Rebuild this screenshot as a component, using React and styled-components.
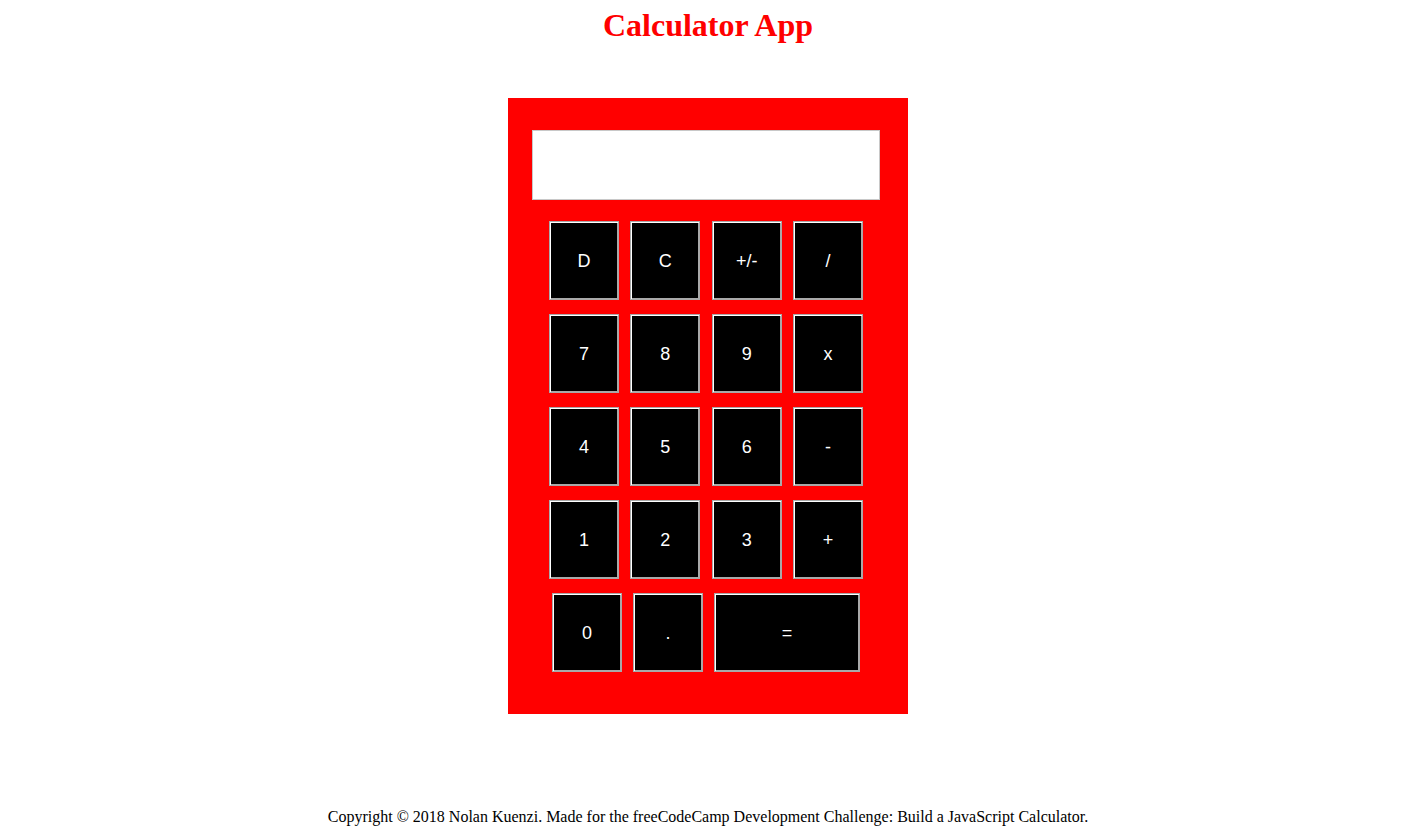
import React from 'react'
import { styled, createGlobalStyle } from 'styled-components'

const GlobalStyle = createGlobalStyle`
  body {
    margin: 0;
    background: #fff;
    font-family: "Liberation Serif", "Times New Roman", serif;
  }
`;

const keys = [
  ['D', 'C', '+/-', '/'],
  ['7', '8', '9', 'x'],
  ['4', '5', '6', '-'],
  ['1', '2', '3', '+'],
];

export default function App() {
  return (
    <Page>
      <GlobalStyle />
      <Title>Calculator App</Title>
      <Calculator>
        <Display />
        <Keypad>
          {keys.map((row, i) => (
            <Row key={i}>
              {row.map((k) => <Key key={k}>{k}</Key>)}
            </Row>
          ))}
          <LastRow>
            <Key>0</Key>
            <Key>.</Key>
            <Key $wide>=</Key>
          </LastRow>
        </Keypad>
      </Calculator>
      <Footer>
        Copyright © 2018 Nolan Kuenzi. Made for the freeCodeCamp Development Challenge: Build a JavaScript Calculator.
      </Footer>
    </Page>
  )
}

const Page = styled.div`
  display: flex;
  flex-direction: column;
  align-items: center;
  padding-right: 1px;
`;

const Title = styled.h1`
  margin: 7px 0 0;
  font-size: 32px;
  line-height: 37px;
  font-weight: 700;
  color: #ff0000;
`;

const Calculator = styled.div`
  margin-top: 54px;
  width: 400px;
  height: 616px;
  box-sizing: border-box;
  background: #ff0000;
  padding: 32px 0 0 0;
`;

const Display = styled.div`
  margin-left: 24px;
  width: 348px;
  height: 70px;
  box-sizing: border-box;
  background: #fff;
  border: 1px solid #c8c8c8;
`;

const Keypad = styled.div`
  margin: 21px 0 0 41px;
  width: 314px;
  display: flex;
  flex-direction: column;
  gap: 14px;
`;

const Row = styled.div`
  display: flex;
  justify-content: space-between;
`;

const LastRow = styled.div`
  display: flex;
  justify-content: center;
  gap: 11px;
`;

const Key = styled.button`
  width: ${(p) => (p.$wide ? '146px' : '70px')};
  height: 79px;
  box-sizing: border-box;
  padding: 1px 0 0;
  background: #000;
  color: #fff;
  font-family: "Liberation Sans", Arial, sans-serif;
  font-size: 18px;
  border: 1px solid #a9a9a9;
  box-shadow: inset 1px 1px 0 #fff, inset -1px -1px 0 #a9a9a9;
  cursor: pointer;
`;

const Footer = styled.footer`
  margin-top: 94px;
  font-size: 16px;
  line-height: 18px;
  color: #000;
  text-align: center;
`;
